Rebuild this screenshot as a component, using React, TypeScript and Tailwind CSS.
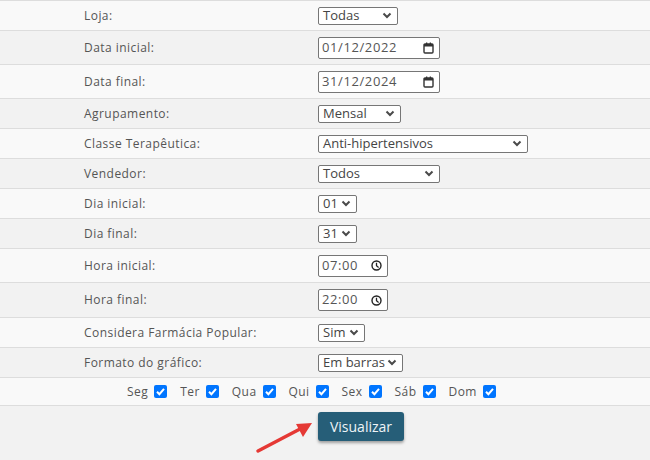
import React from "react";

const font = { fontFamily: '"Open Sans", "DejaVu Sans", sans-serif' };

function Chevron() {
  return (
    <svg width="10" height="7" viewBox="0 0 10 7" className="shrink-0">
      <path d="M1.5 1.5 L5 5 L8.5 1.5" fill="none" stroke="#4a4a4a" strokeWidth="2" />
    </svg>
  );
}

function Select({ value, w }: { value: string; w: string }) {
  return (
    <div
      className={`flex h-[18px] items-center justify-between rounded-[2px] border border-[#767676] bg-white pl-[4px] pr-[5px] text-[13px] leading-none text-[#444] ${w}`}
    >
      <span>{value}</span>
      <Chevron />
    </div>
  );
}

function CalendarIcon() {
  return (
    <svg width="11" height="12" viewBox="0 0 11 12">
      <rect x="1" y="2" width="9" height="9" rx="1" fill="none" stroke="#333" strokeWidth="1.4" />
      <rect x="1" y="2" width="9" height="2.5" fill="#333" />
      <rect x="3" y="0.5" width="1.3" height="2" fill="#333" />
      <rect x="6.7" y="0.5" width="1.3" height="2" fill="#333" />
    </svg>
  );
}

function ClockIcon() {
  return (
    <svg width="11" height="11" viewBox="0 0 11 11">
      <circle cx="5.5" cy="5.5" r="4.5" fill="none" stroke="#222" strokeWidth="1.4" />
      <path d="M5.5 2.8 V5.7 L7.6 7.4" fill="none" stroke="#222" strokeWidth="1.3" />
    </svg>
  );
}

function DateInput({ value }: { value: string }) {
  return (
    <div className="flex h-[22px] w-[122px] items-center justify-between rounded-[2px] border border-[#767676] bg-white pl-[3px] pr-[5px] text-[13px] tracking-[0.6px] text-[#555]">
      <span>{value}</span>
      <CalendarIcon />
    </div>
  );
}

function TimeInput({ value }: { value: string }) {
  return (
    <div className="flex h-[22px] w-[70px] items-center justify-between rounded-[2px] border border-[#767676] bg-white pl-[3px] pr-[5px] text-[13px] tracking-[0.6px] text-[#555]">
      <span>{value}</span>
      <ClockIcon />
    </div>
  );
}

function Check() {
  return (
    <span className="inline-flex h-[13px] w-[13px] items-center justify-center rounded-[2px] bg-[#0075ff]">
      <svg width="11" height="11" viewBox="0 0 11 11">
        <path d="M2 5.8 L4.4 8.2 L9 2.8" fill="none" stroke="white" strokeWidth="2" />
      </svg>
    </span>
  );
}

const rows: { label: string; h: string; control: React.ReactNode }[] = [
  { label: "Loja:", h: "h-[30px]", control: <Select value="Todas" w="w-[80px]" /> },
  { label: "Data inicial:", h: "h-[34px]", control: <DateInput value="01/12/2022" /> },
  { label: "Data final:", h: "h-[34px]", control: <DateInput value="31/12/2024" /> },
  { label: "Agrupamento:", h: "h-[30px]", control: <Select value="Mensal" w="w-[83px]" /> },
  { label: "Classe Terapêutica:", h: "h-[30px]", control: <Select value="Anti-hipertensivos" w="w-[210px]" /> },
  { label: "Vendedor:", h: "h-[30px]", control: <Select value="Todos" w="w-[122px]" /> },
  { label: "Dia inicial:", h: "h-[30px]", control: <Select value="01" w="w-[39px]" /> },
  { label: "Dia final:", h: "h-[30px]", control: <Select value="31" w="w-[39px]" /> },
  { label: "Hora inicial:", h: "h-[34px]", control: <TimeInput value="07:00" /> },
  { label: "Hora final:", h: "h-[35px]", control: <TimeInput value="22:00" /> },
  { label: "Considera Farmácia Popular:", h: "h-[30px]", control: <Select value="Sim" w="w-[47px]" /> },
  { label: "Formato do gráfico:", h: "h-[30px]", control: <Select value="Em barras" w="w-[85px]" /> },
];

const days = ["Seg", "Ter", "Qua", "Qui", "Sex", "Sáb", "Dom"];

export default function App() {
  return (
    <div className="relative h-[460px] w-[650px] overflow-hidden bg-[#f2f2f2]" style={font}>
      <div className="border-t border-[#dddddd]">
        {rows.map((row, i) => (
          <div
            key={row.label}
            className={`grid grid-cols-[318px_1fr] items-center border-b border-[#dddddd] ${row.h} ${
              i % 2 === 0 ? "bg-[#f9f9f9]" : "bg-[#f2f2f2]"
            }`}
          >
            <div className="pl-[84px] text-[12px] tracking-[0.45px] text-[#555]">{row.label}</div>
            <div>{row.control}</div>
          </div>
        ))}

        {/* dias da semana */}
        <div className="flex h-[28px] items-center border-b border-[#dddddd] bg-[#f9f9f9] pl-[127px] text-[12px] tracking-[0.45px] text-[#555]">
          {days.map((d) => (
            <label key={d} className="mr-[13px] inline-flex items-center gap-[6px]">
              <span>{d}</span>
              <Check />
            </label>
          ))}
        </div>
      </div>

      <div className="pl-[318px] pt-[6px]">
        <button className="h-[29px] w-[86px] rounded-[3px] bg-[#265e78] text-[14px] font-medium text-[#eef4f7] shadow-[0_2px_3px_rgba(0,0,0,0.35)]">
          Visualizar
        </button>
      </div>

      {/* seta */}
      <svg className="absolute left-[250px] top-[415px]" width="70" height="45" viewBox="0 0 70 45">
        <line x1="8" y1="36" x2="50" y2="14" stroke="#e53935" strokeWidth="3.5" strokeLinecap="round" />
        <polygon points="62,8 46,9 53,22" fill="#e53935" />
      </svg>
    </div>
  );
}
